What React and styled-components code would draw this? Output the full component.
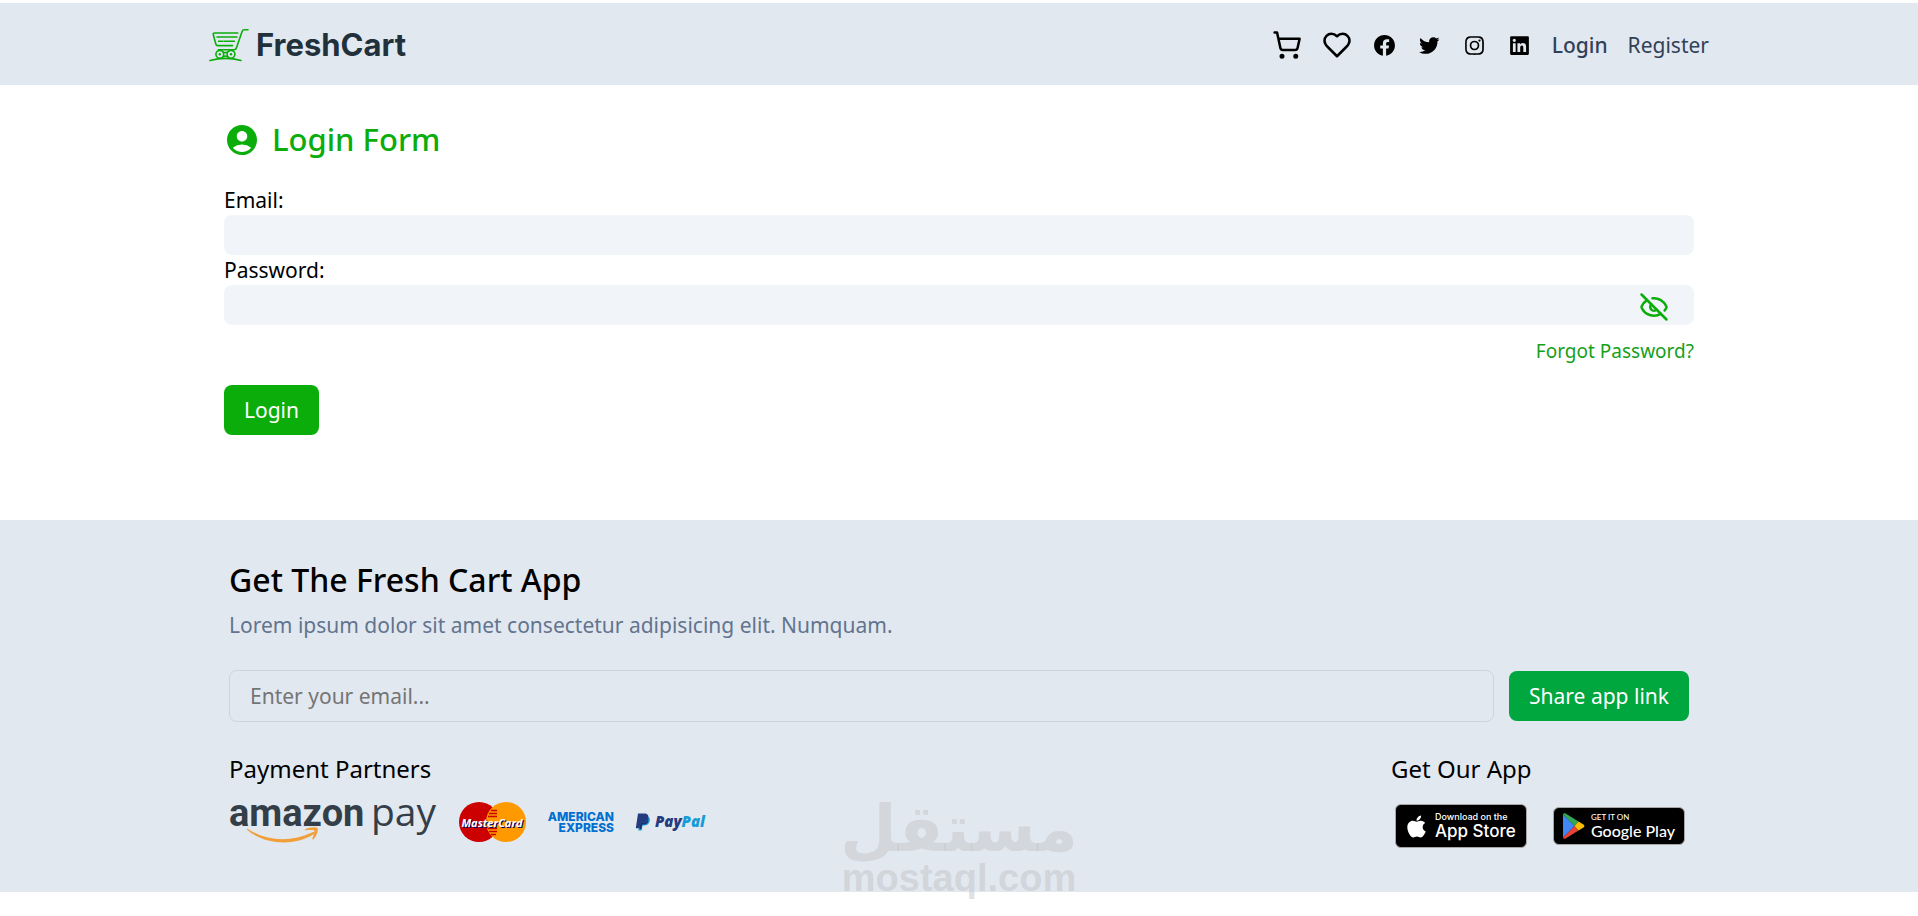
import { useState } from 'react';
import styled, { createGlobalStyle } from 'styled-components';
import { Eye, EyeOff } from 'lucide-react';
import { LuHeart, LuShoppingCart } from 'react-icons/lu';
import {
  BiLogoFacebookCircle,
  BiLogoInstagram,
  BiLogoLinkedinSquare,
  BiLogoTwitter,
} from 'react-icons/bi';
import { MdAccountCircle } from 'react-icons/md';
import { FaApple } from 'react-icons/fa';

const BRAND = '#0aad0a';
const PANEL = '#e2e8f0';

const socialLinks = [
  { name: 'Facebook', Icon: BiLogoFacebookCircle },
  { name: 'Twitter', Icon: BiLogoTwitter },
  { name: 'Instagram', Icon: BiLogoInstagram },
  { name: 'LinkedIn', Icon: BiLogoLinkedinSquare },
];

const CartLogo = () => (
  <svg width='42' height='36' viewBox='0 0 42 36' fill='none' aria-hidden='true'>
    <g
      stroke={BRAND}
      strokeWidth='1.6'
      strokeLinecap='round'
      strokeLinejoin='round'
    >
      <path d='M39 2.8h-3.6c-1.3 0-2 .7-2.4 1.9L27.4 21c-.4 1.2-1 1.7-2.2 1.7H9.5' />
      <path d='M28.8 6H5.6c-1.2 0-1.6.7-1.3 1.7L6.8 17c.3 1.1.9 1.6 2 1.6h14.7' />
      <path d='M8 10h20M9.5 14.3h4M15 14.3h10.5' />
      <circle cx='10.8' cy='27.3' r='3.9' />
      <circle cx='22' cy='27.3' r='3.9' />
      <path d='M14 24.8c1.5 1 3.3 1 4.8 0M14 29.8c1.5-1 3.3-1 4.8 0' />
      <path d='M1 33.5c9.5-2.6 21-2.8 31 0' />
    </g>
    <circle cx='10.8' cy='27.3' r='1.2' fill={BRAND} />
    <circle cx='22' cy='27.3' r='1.2' fill={BRAND} />
  </svg>
);

const AmazonPayLogo = () => (
  <svg width='210' height='64' viewBox='0 -10 210 64' role='img' aria-label='Amazon Pay'>
    <g fill='#333e48'>
      <text
        x='0'
        y='26'
        fontFamily='"Liberation Sans Narrow", Roboto, sans-serif'
        fontSize='38'
        fontWeight='700'
      >
        amazon
      </text>
      <text
        x='142'
        y='26'
        fontFamily='"Open Sans", sans-serif'
        fontSize='39'
        fontWeight='400'
      >
        pay
      </text>
    </g>
    <path
      d='M19 29c19 12.5 43 13.5 64.5 3.2 1.5-.6 2.5.9 1.2 2C65 46.5 36 45 18.3 30c-.7-.7 0-1.5.7-1z'
      fill='#f19f3a'
    />
    <path
      d='M76 29.5c3.5-2.5 11.5-2.8 12.5-1.5s-.4 8-4 11.2c-.8.6-1.4.3-1.1-.6 1-2.5 2.600-7 1.700-8s-5.500-.6-8.200-.3c-1 .1-1.500-.4-.9-.8z'
      fill='#f19f3a'
    />
  </svg>
);

const MasterCardLogo = () => (
  <svg width='68' height='40' viewBox='0 0 68 40' role='img' aria-label='MasterCard'>
    <circle cx='20' cy='20' r='20' fill='#cc0000' />
    <circle cx='47' cy='20' r='20' fill='#ff9900' />
    <path
      d='M32 8.5h6M30 11.5h8M29 14.5h9M29 26.5h9M30 29.5h8M32 32.5h5'
      stroke='#cc0000'
      strokeWidth='1.5'
    />
    <MasterCardText x='33' y='25'>
      MasterCard
    </MasterCardText>
  </svg>
);

const AmexLogo = () => (
  <svg width='68' height='26' viewBox='0 -2 68 26' role='img' aria-label='American Express'>
    <g
      fill='#016fd0'
      fontFamily='Inter, sans-serif'
      fontSize='12'
      fontWeight='800'
      textAnchor='end'
    >
      <text x='67' y='10'>
        AMERICAN
      </text>
      <text x='67' y='21'>
        EXPRESS
      </text>
    </g>
  </svg>
);

const PayPalLogo = () => (
  <svg width='76' height='20' viewBox='0 0 76 20' role='img' aria-label='PayPal'>
    <path
      d='M5.5 4.5h7.2c2.3.8 2.5 3 1.8 5.2-.9 2.7-3 3.8-5.6 3.8H7.6L6.7 18.500H3.300z'
      fill='#179bd7'
    />
    <path
      d='M3 1.5h6.300c3 0 4.600 1.600 4 4.600-.6 3.200-2.700 4.700-5.700 4.700H5.500l-.9 5.500H.8z'
      fill='#253b80'
    />
    <path
      d='M5.500 10.800h2.300c2.700 0 4.700-1.300 5.400-4.200.8 3.700-1.200 6-4.500 6H7.200L6.300 17H4.600z'
      fill='#222d65'
    />
    <text
      x='20'
      y='15'
      fontFamily='"Open Sans", sans-serif'
      fontSize='15'
      fontStyle='italic'
      fontWeight='800'
    >
      <tspan fill='#253b80'>Pay</tspan>
      <tspan fill='#179bd7'>Pal</tspan>
    </text>
  </svg>
);

const PlayLogo = () => (
  <svg width='23' height='26' viewBox='0 0 23 26' aria-hidden='true'>
    <path d='M1 1.2v23.6L12.5 13z' fill='#4285f4' />
    <path d='M1 1.2C1.5.2 2.6 0 3.6.6l12.9 7.900L12.500 13z' fill='#34a853' />
    <path d='M1 24.8c.5 1 1.6 1.2 2.6.6l12.900-7.900-4-4.500z' fill='#ea4335' />
    <path d='M16.5 8.5l5 3c1.2.8 1.2 2.2 0 3l-5 3-4-4.500z' fill='#fbbc04' />
  </svg>
);

const Header = () => (
  <HeaderStyle>
    <Container $width={1500}>
      <Nav>
        <Brand href='#'>
          <CartLogo />
          FreshCart
        </Brand>
        <NavLinks>
          <NavLink href='#' aria-label='Cart'>
            <LuShoppingCart size={30} />
          </NavLink>
          <NavLink href='#' aria-label='Wishlist'>
            <LuHeart size={30} />
          </NavLink>
          {socialLinks.map(({ name, Icon }) => (
            <NavLink key={name} href='#' aria-label={name}>
              <Icon size={25} />
            </NavLink>
          ))}
          <NavText href='#' $active>
            Login
          </NavText>
          <NavText href='#'>Register</NavText>
        </NavLinks>
      </Nav>
    </Container>
  </HeaderStyle>
);

const LoginForm = () => {
  const [visible, setVisible] = useState(false);

  return (
    <Main>
      <Container $width={1470}>
        <FormTitle>
          <MdAccountCircle size={36} />
          Login Form
        </FormTitle>
        <form onSubmit={(e) => e.preventDefault()}>
          <Label htmlFor='email'>Email:</Label>
          <Field id='email' type='email' />
          <Label htmlFor='password'>Password:</Label>
          <PasswordBox>
            <Field id='password' type={visible ? 'text' : 'password'} />
            <EyeButton
              type='button'
              aria-label='Toggle password'
              onClick={() => setVisible(!visible)}
            >
              {visible ? <Eye size={30} /> : <EyeOff size={30} />}
            </EyeButton>
          </PasswordBox>
          <ForgotRow>
            <a href='#'>Forgot Password?</a>
          </ForgotRow>
          <Button type='submit'>Login</Button>
        </form>
      </Container>
    </Main>
  );
};

const Footer = () => (
  <FooterStyle>
    <Container $width={1460}>
      <FooterTitle>Get The Fresh Cart App</FooterTitle>
      <FooterText>
        Lorem ipsum dolor sit amet consectetur adipisicing elit. Numquam.
      </FooterText>
      <ShareForm onSubmit={(e) => e.preventDefault()}>
        <ShareInput
          type='email'
          aria-label='Email'
          placeholder='Enter your email...'
        />
        <Button type='submit' $color='#00a63e'>
          Share app link
        </Button>
      </ShareForm>
      <FooterBottom>
        <div>
          <GroupTitle>Payment Partners</GroupTitle>
          <Logos>
            <AmazonPayLogo />
            <MasterCardLogo />
            <AmexLogo />
            <PayPalLogo />
          </Logos>
        </div>
        <div>
          <GroupTitle>Get Our App</GroupTitle>
          <Badges>
            <Badge href='#' $height={44}>
              <FaApple size={25} />
              <BadgeText $font='Inter' $small={9} $large={17}>
                <small>Download on the</small>
                <strong>App Store</strong>
              </BadgeText>
            </Badge>
            <Badge href='#' $height={38}>
              <PlayLogo />
              <BadgeText $font='Lato' $small={8} $large={16}>
                <small>GET IT ON</small>
                <strong>Google Play</strong>
              </BadgeText>
            </Badge>
          </Badges>
        </div>
      </FooterBottom>
    </Container>
  </FooterStyle>
);

const App = () => (
  <>
    <GlobalStyle />
    <Page>
      <Header />
      <LoginForm />
      <Footer />
      <Watermark>
        <span lang='ar'>مستقل</span>
        <span>mostaql.com</span>
      </Watermark>
    </Page>
  </>
);

const GlobalStyle = createGlobalStyle`
  * {
    box-sizing: border-box;
  }

  body {
    margin: 0;
    background: #ffffff;
    color: #000000;
    font-family: 'Noto Sans', sans-serif;
    font-size: 21px;
    line-height: 30px;
  }

  a {
    color: inherit;
    text-decoration: none;
  }

  input,
  button {
    font: inherit;
  }

  svg {
    display: block;
    flex-shrink: 0;
  }
`;

const Page = styled.div`
  position: relative;
  min-height: 100vh;
  padding-top: 3px;
`;

const Container = styled.div`
  max-width: ${({ $width }) => $width}px;
  margin: 0 auto;
`;

const HeaderStyle = styled.header`
  background: ${PANEL};
  padding: 21px 0 19px;
`;

const Nav = styled.nav`
  display: flex;
  justify-content: space-between;
  align-items: center;
  min-height: 42px;
`;

const Brand = styled.a`
  display: flex;
  align-items: center;
  gap: 5px;
  color: #21313c;
  font-family: Inter, sans-serif;
  font-size: 31px;
  font-weight: 700;
`;

const NavLinks = styled.div`
  display: flex;
  align-items: center;
  gap: 20px;
`;

const NavLink = styled.a`
  color: #000000;
`;

const NavText = styled.a`
  color: #314158;
  font-weight: ${({ $active }) => ($active ? 500 : 400)};
`;

const Main = styled.main`
  padding: 32px 0 85px;
`;

const FormTitle = styled.h1`
  display: flex;
  align-items: center;
  gap: 12px;
  margin: 0 0 23px;
  color: ${BRAND};
  font-size: 31px;
  font-weight: 500;
  line-height: 45px;
`;

const Label = styled.label`
  display: block;
`;

const Field = styled.input`
  display: block;
  width: 100%;
  height: 40px;
  padding: 5px 10px;
  border: 0;
  border-radius: 8px;
  background: #f1f5f9;
`;

const PasswordBox = styled.div`
  position: relative;
`;

const EyeButton = styled.button`
  position: absolute;
  top: 7px;
  right: 25px;
  padding: 0;
  border: 0;
  background: none;
  color: ${BRAND};
  cursor: pointer;
`;

const ForgotRow = styled.div`
  display: flex;
  justify-content: flex-end;
  padding: 11px 0 19px;
  color: #16a01a;
  font-size: 19px;
`;

const Button = styled.button`
  height: 50px;
  padding: 0 20px;
  border: 0;
  border-radius: 8px;
  background: ${({ $color }) => $color || BRAND};
  color: #ffffff;
  white-space: nowrap;
  cursor: pointer;
`;

const FooterStyle = styled.footer`
  padding: 40px 0 30px;
  background: ${PANEL};
`;

const FooterTitle = styled.h2`
  margin: 0 0 10px;
  font-size: 32px;
  font-weight: 500;
  line-height: 40px;
`;

const FooterText = styled.p`
  margin: 0 0 30px;
  color: #62748e;
`;

const ShareForm = styled.form`
  display: flex;
  align-items: center;
  gap: 15px;
`;

const ShareInput = styled.input`
  flex: 1;
  min-width: 0;
  height: 52px;
  padding: 10px 20px;
  border: 1px solid #cad5e2;
  border-radius: 8px;
  background: transparent;

  &::placeholder {
    color: #757575;
  }
`;

const FooterBottom = styled.div`
  display: flex;
  justify-content: space-between;
  margin-top: 32px;
`;

const GroupTitle = styled.h3`
  margin: 0 0 6px;
  font-size: 24px;
  font-weight: 400;
`;

const Logos = styled.div`
  display: flex;
  align-items: center;
  gap: 20px;
  height: 64px;
`;

const MasterCardText = styled.text`
  fill: #ffffff;
  font-family: 'Open Sans', sans-serif;
  font-size: 11px;
  font-style: italic;
  font-weight: 700;
  text-anchor: middle;
  text-shadow: 1px 1px 0 #000066;
`;

const Badges = styled.div`
  display: flex;
  align-items: center;
  gap: 26px;
  height: 72px;
  padding: 0 4px;
`;

const Badge = styled.a`
  display: flex;
  align-items: center;
  gap: 6px;
  width: 132px;
  height: ${({ $height }) => $height}px;
  padding: 0 8px;
  border: 1px solid #a6a6a6;
  border-radius: 6px;
  background: #000000;
  color: #ffffff;
`;

const BadgeText = styled.span`
  display: flex;
  flex-direction: column;
  font-family: ${({ $font }) => $font}, sans-serif;
  white-space: nowrap;

  small {
    font-size: ${({ $small }) => $small}px;
    font-weight: 500;
    line-height: 10px;
  }

  strong {
    font-size: ${({ $large }) => $large}px;
    font-weight: 500;
    line-height: 18px;
  }
`;

const Watermark = styled.div`
  position: absolute;
  top: 798px;
  left: 50%;
  display: flex;
  flex-direction: column;
  align-items: center;
  transform: translateX(-50%);
  color: rgba(195, 195, 195, 0.5);
  font-family: 'Liberation Sans', sans-serif;
  font-size: 38px;
  font-weight: 700;
  line-height: 36px;
  pointer-events: none;

  span:first-child {
    font-family: 'DejaVu Sans', sans-serif;
    font-size: 65px;
    line-height: 62px;
  }
`;

export default App;
